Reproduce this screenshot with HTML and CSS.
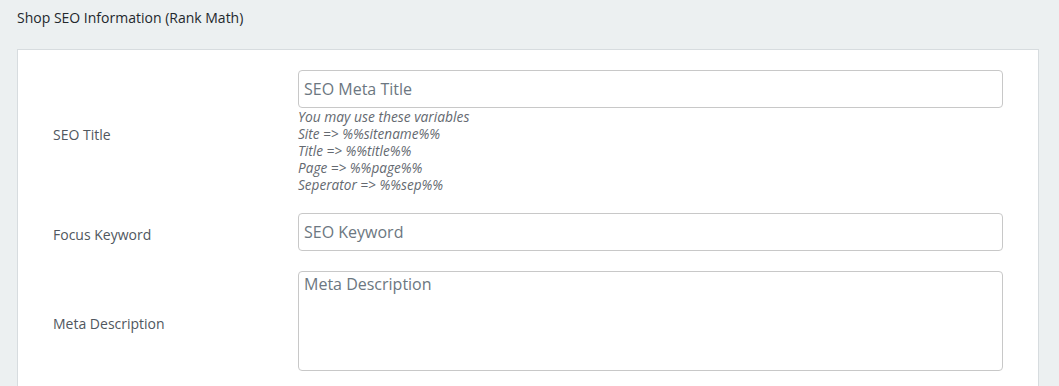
FILE: index.html
```html
<!DOCTYPE html>
<html lang="en">
<head>
    <meta charset="UTF-8">
    <meta name="viewport" content="width=device-width, initial-scale=1.0">
    <title>Shop SEO Information</title>
    <link rel="stylesheet" href="styles.css">
</head>
<body>
    <h2 class="section-title">Shop SEO Information (Rank Math)</h2>

    <div class="seo-card">
        <div class="seo-row">
            <label class="seo-label" for="seo-title">SEO Title</label>
            <div class="seo-field">
                <input id="seo-title" class="seo-input" type="text" placeholder="SEO Meta Title">
                <div class="seo-hint">
                    <div class="hint-head">You may use these variables</div>
                    <div>Site =&gt; %%sitename%%</div>
                    <div>Title =&gt; %%title%%</div>
                    <div>Page =&gt; %%page%%</div>
                    <div>Seperator =&gt; %%sep%%</div>
                </div>
            </div>
        </div>

        <div class="seo-row">
            <label class="seo-label" for="seo-keyword">Focus Keyword</label>
            <div class="seo-field">
                <input id="seo-keyword" class="seo-input" type="text" placeholder="SEO Keyword">
            </div>
        </div>

        <div class="seo-row">
            <label class="seo-label" for="seo-desc">Meta Description</label>
            <div class="seo-field">
                <textarea id="seo-desc" class="seo-input seo-textarea" placeholder="Meta Description"></textarea>
            </div>
        </div>
    </div>
</body>
</html>
```

FILE: styles.css
```css
body {
    font-family: 'Open Sans', sans-serif;
    margin: 0;
    padding: 0 20px 0 17px;
    background: #ecf0f1;
    color: #50575e;
}
.section-title {
    font-size: 14px;
    font-weight: normal;
    color: #23282d;
    margin: 0;
    padding: 9px 0 0;
    line-height: 18px;
    height: 40px;
}
.seo-card {
    background: white;
    border: 1px solid #d7dcdf;
    padding: 20px 35px 20px;
    display: flex;
    flex-direction: column;
    gap: 20px;
}
.seo-row {
    display: flex;
    align-items: center;
}
.seo-label {
    width: 245px;
    flex-shrink: 0;
    font-size: 14px;
    color: #50575e;
    padding-top: 5px;
}
.seo-field {
    width: 705px;
}
.seo-input {
    display: block;
    box-sizing: border-box;
    width: 100%;
    height: 38px;
    border: 1px solid #c8c8c8;
    border-radius: 4px;
    padding: 0 5px 1px;
    font-family: 'Open Sans', sans-serif;
    font-size: 16px;
    color: #32373c;
    background: white;
    margin: 0;
}
.seo-input::placeholder {
    color: #6c7781;
    opacity: 1;
}
.seo-textarea {
    height: 100px;
    padding: 1px 5px;
    resize: none;
    line-height: 22px;
}
.seo-hint {
    font-style: italic;
    font-size: 13.6px;
    line-height: 17px;
    color: #646970;
}
.hint-head {
    font-size: 13.8px;
}
```
